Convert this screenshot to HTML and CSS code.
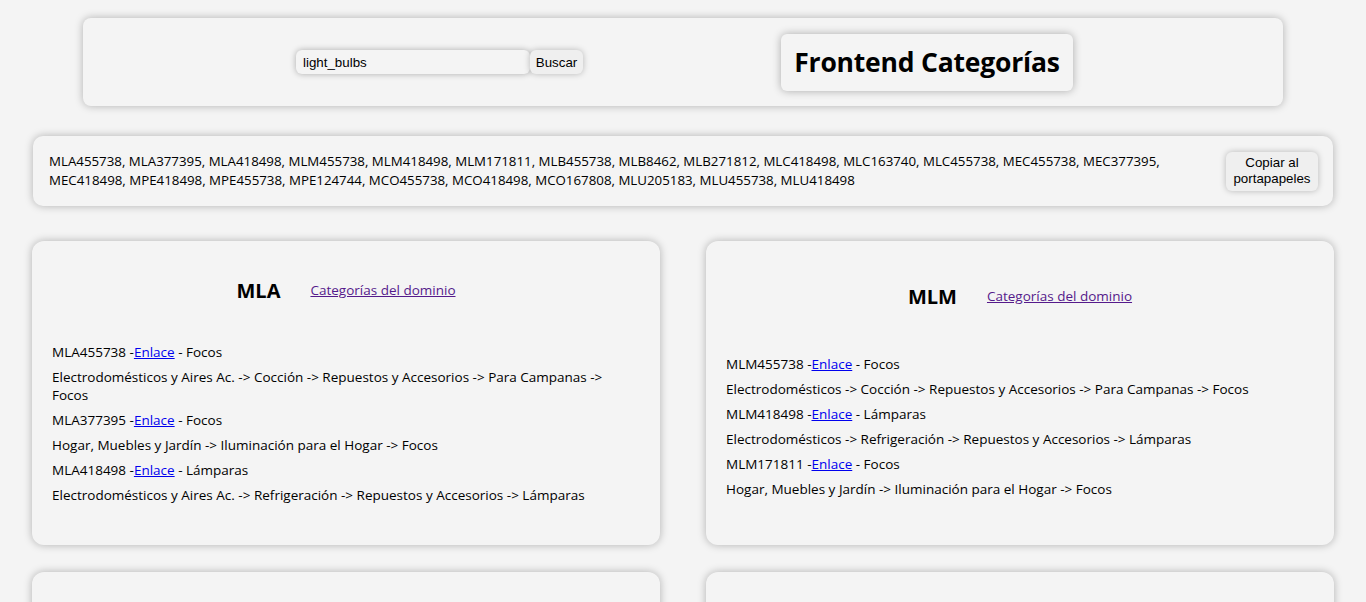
FILE: index.html
```html
<!DOCTYPE html>
<html lang="es">
<head>
<meta charset="utf-8">
<title>Frontend Categorías</title>
<link rel="stylesheet" href="styles.css">
</head>
<body>
<header class="top">
  <form class="search">
    <input class="search-input" type="text" value="light_bulbs">
    <button class="search-btn" type="button">Buscar</button>
  </form>
  <div class="title-box"><h1>Frontend Categorías</h1></div>
</header>

<section class="ids">
  <p class="ids-text">MLA455738, MLA377395, MLA418498, MLM455738, MLM418498, MLM171811, MLB455738, MLB8462, MLB271812, MLC418498, MLC163740, MLC455738, MEC455738, MEC377395, MEC418498, MPE418498, MPE455738, MPE124744, MCO455738, MCO418498, MCO167808, MLU205183, MLU455738, MLU418498</p>
  <button class="copy-btn" type="button">Copiar al portapapeles</button>
</section>

<main class="grid">
  <article class="card">
    <div class="card-head"><h2>MLA</h2><a class="visited" href="#">Categorías del dominio</a></div>
    <ul class="list">
      <li>MLA455738 -<a href="#">Enlace</a> - Focos</li>
      <li>Electrodomésticos y Aires Ac. -&gt; Cocción -&gt; Repuestos y Accesorios -&gt; Para Campanas -&gt; Focos</li>
      <li>MLA377395 -<a href="#">Enlace</a> - Focos</li>
      <li>Hogar, Muebles y Jardín -&gt; Iluminación para el Hogar -&gt; Focos</li>
      <li>MLA418498 -<a href="#">Enlace</a> - Lámparas</li>
      <li>Electrodomésticos y Aires Ac. -&gt; Refrigeración -&gt; Repuestos y Accesorios -&gt; Lámparas</li>
    </ul>
  </article>
  <article class="card">
    <div class="card-head"><h2>MLM</h2><a class="visited" href="#">Categorías del dominio</a></div>
    <ul class="list">
      <li>MLM455738 -<a href="#">Enlace</a> - Focos</li>
      <li>Electrodomésticos -&gt; Cocción -&gt; Repuestos y Accesorios -&gt; Para Campanas -&gt; Focos</li>
      <li>MLM418498 -<a href="#">Enlace</a> - Lámparas</li>
      <li>Electrodomésticos -&gt; Refrigeración -&gt; Repuestos y Accesorios -&gt; Lámparas</li>
      <li>MLM171811 -<a href="#">Enlace</a> - Focos</li>
      <li>Hogar, Muebles y Jardín -&gt; Iluminación para el Hogar -&gt; Focos</li>
    </ul>
  </article>
  <article class="card">
    <div class="card-head"><h2>MLB</h2><a class="visited" href="#">Categorías del dominio</a></div>
    <ul class="list">
      <li>MLB455738 -<a href="#">Enlace</a> - Focos</li>
      <li>Eletrodomésticos -&gt; Fornos e Fogões -&gt; Peças e Acessórios -&gt; Lâmpadas</li>
      <li>MLB8462 -<a href="#">Enlace</a> - Lâmpadas</li>
      <li>Casa, Móveis e Decoração -&gt; Iluminação -&gt; Lâmpadas</li>
      <li>MLB271812 -<a href="#">Enlace</a> - Lâmpadas</li>
      <li>Eletrodomésticos -&gt; Refrigeração -&gt; Peças e Acessórios -&gt; Lâmpadas</li>
    </ul>
  </article>
  <article class="card">
    <div class="card-head"><h2>MLC</h2><a class="visited" href="#">Categorías del dominio</a></div>
    <ul class="list">
      <li>MLC418498 -<a href="#">Enlace</a> - Lámparas</li>
      <li>Electrodomésticos -&gt; Refrigeración -&gt; Repuestos y Accesorios -&gt; Lámparas</li>
      <li>MLC163740 -<a href="#">Enlace</a> - Ampolletas</li>
      <li>Hogar y Muebles -&gt; Iluminación -&gt; Ampolletas</li>
      <li>MLC455738 -<a href="#">Enlace</a> - Focos</li>
      <li>Electrodomésticos -&gt; Cocción -&gt; Repuestos y Accesorios -&gt; Focos</li>
    </ul>
  </article>
</main>
</body>
</html>
```

FILE: styles.css
```css
* { box-sizing: border-box; }

body {
  margin: 0;
  background: #f4f4f4;
  font-family: "Open Sans", "Noto Sans", sans-serif;
  font-size: 13.5px;
  color: #000;
}

.top {
  width: 1200px;
  height: 88px;
  margin: 18px auto 0;
  display: flex;
  align-items: center;
  justify-content: space-evenly;
  border-radius: 8px;
  box-shadow: 0 0 8px rgba(0, 0, 0, 0.28);
}

.search {
  display: flex;
  align-items: center;
  margin: 0 0 0 15px;
}

.search-input {
  width: 234px;
  height: 24px;
  border: none;
  border-radius: 6px;
  background: #f4f4f4;
  box-shadow: 0 0 6px rgba(0, 0, 0, 0.3);
  padding: 0 7px;
  font-family: "Liberation Sans", Arial, sans-serif;
  font-size: 13.33px;
  color: #000;
  outline: none;
}

.search-btn {
  height: 24px;
  width: 53px;
  padding: 0;
  border: none;
  border-radius: 6px;
  background: #efefef;
  box-shadow: 0 0 6px rgba(0, 0, 0, 0.25);
  font-family: "Liberation Sans", Arial, sans-serif;
  font-size: 13.33px;
  color: #000;
}

.title-box {
  height: 57px;
  width: 292px;
  margin-right: 12px;
  display: flex;
  align-items: center;
  justify-content: center;
  border-radius: 6px;
  box-shadow: 0 0 8px rgba(0, 0, 0, 0.3);
}

.title-box h1 {
  margin: 0;
  font-size: 26.5px;
  font-weight: 700;
  letter-spacing: -0.2px;
}

.ids {
  width: 1300px;
  height: 70px;
  margin: 30px 0 0 33px;
  padding: 0 15px 0 16px;
  display: flex;
  align-items: center;
  justify-content: space-between;
  border-radius: 10px;
  box-shadow: 0 0 8px rgba(0, 0, 0, 0.28);
}

.ids-text {
  margin: 0;
  width: 1130px;
  line-height: 19px;
  font-size: 13.3px;
}

.copy-btn {
  width: 92px;
  height: 39px;
  padding: 0 4px;
  border: none;
  border-radius: 6px;
  background: #efefef;
  box-shadow: 0 0 6px rgba(0, 0, 0, 0.25);
  font-family: "Liberation Sans", Arial, sans-serif;
  font-size: 13.33px;
  line-height: 16px;
  color: #000;
}

.grid {
  display: grid;
  grid-template-columns: 628px 628px;
  column-gap: 46px;
  row-gap: 27px;
  margin: 35px 0 0 32px;
}

.card {
  height: 304px;
  padding: 0 20px 5.5px;
  display: flex;
  flex-direction: column;
  justify-content: space-evenly;
  border-radius: 12px;
  box-shadow: 0 0 8px rgba(0, 0, 0, 0.28);
}

.card-head {
  display: flex;
  align-items: center;
  justify-content: center;
  gap: 30px;
  padding-bottom: 4px;
}

.card-head h2 {
  margin: 0;
  font-size: 20px;
  line-height: 27px;
  font-weight: 700;
}

a { color: #0000ee; }
a.visited { color: #551a8b; }

.list {
  list-style: none;
  margin: 0;
  padding: 0;
  display: flex;
  flex-direction: column;
  gap: 7px;
}

.list li {
  line-height: 18px;
}
```
